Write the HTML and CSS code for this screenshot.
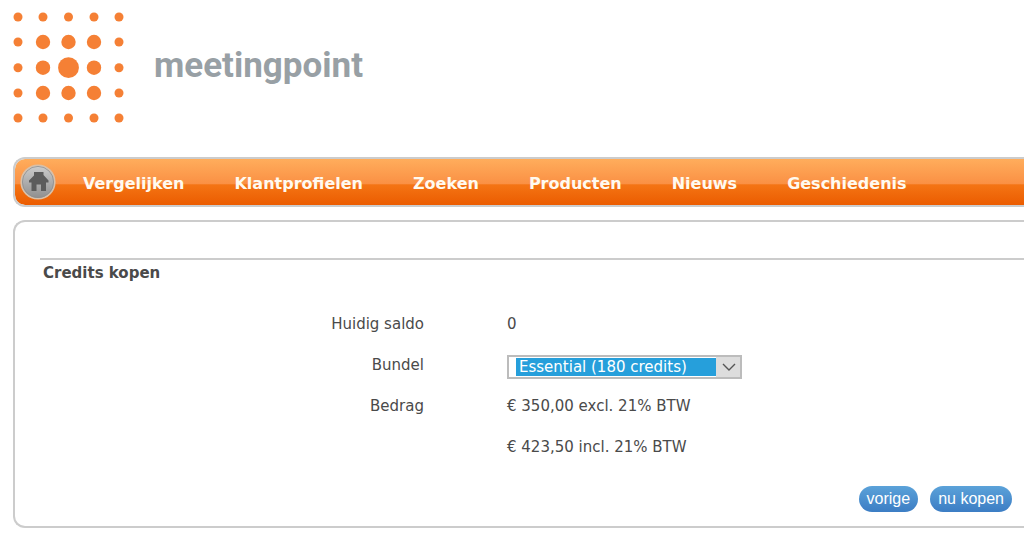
FILE: index.html
```html
<!DOCTYPE html>
<html lang="nl">
<head>
<meta charset="utf-8">
<meta name="viewport" content="width=device-width, initial-scale=1">
<title>Credits kopen - meetingpoint</title>
<link rel="stylesheet" href="styles.css">
</head>
<body>
<header class="header">
  <svg class="logo" viewBox="0 0 112 112" width="112" height="112" aria-hidden="true">
    <g fill="#f58035">
      <circle cx="5" cy="5" r="4.5"/><circle cx="30" cy="5" r="4.5"/><circle cx="55.5" cy="5" r="4.5"/><circle cx="81" cy="5" r="4.5"/><circle cx="106" cy="5" r="4.5"/>
      <circle cx="5" cy="30" r="4.5"/><circle cx="30" cy="30" r="7.2"/><circle cx="55.5" cy="30" r="7.2"/><circle cx="81" cy="30" r="7.2"/><circle cx="106" cy="30" r="4.5"/>
      <circle cx="5" cy="55.7" r="4.5"/><circle cx="30" cy="55.7" r="7.2"/><circle cx="55.5" cy="55.7" r="10.4"/><circle cx="81" cy="55.7" r="7.2"/><circle cx="106" cy="55.7" r="4.5"/>
      <circle cx="5" cy="81" r="4.5"/><circle cx="30" cy="81" r="7.2"/><circle cx="55.5" cy="81" r="7.2"/><circle cx="81" cy="81" r="7.2"/><circle cx="106" cy="81" r="4.5"/>
      <circle cx="5" cy="106" r="4.5"/><circle cx="30" cy="106" r="4.5"/><circle cx="55.5" cy="106" r="4.5"/><circle cx="81" cy="106" r="4.5"/><circle cx="106" cy="106" r="4.5"/>
    </g>
  </svg>
  <span class="wordmark">meetingpoint</span>
</header>
<nav class="nav">
  <a class="home" href="#" aria-label="Home">
    <svg viewBox="0 0 36 36" width="36" height="36" aria-hidden="true">
      <defs><linearGradient id="disc" x1="0" y1="0" x2="0" y2="1"><stop offset="0" stop-color="#cdcdcd"/><stop offset="1" stop-color="#8e8e8e"/></linearGradient></defs>
      <circle cx="18" cy="18" r="16.8" fill="url(#disc)" stroke="#d9c0a8" stroke-width="1.6"/>
      <circle cx="18" cy="18" r="15.6" fill="none" stroke="#8f8f8f" stroke-width="0.8"/>
      <path d="M14 8 H23.5 V11 L28.5 16.5 V18.5 H26 V27 H21 V20.5 H16.5 V27 H11.5 V18.5 H9 V16.5 L14 11.5 Z" fill="#5c5c5c"/>
    </svg>
  </a>
  <a href="#">Vergelijken</a>
  <a href="#">Klantprofielen</a>
  <a href="#">Zoeken</a>
  <a href="#">Producten</a>
  <a href="#">Nieuws</a>
  <a href="#">Geschiedenis</a>
</nav>
<main class="panel">
  <h1 class="title">Credits kopen</h1>
  <form class="form">
    <div class="row"><span class="label">Huidig saldo</span><span>0</span></div>
    <div class="row">
      <label class="label" for="bundle">Bundel</label>
      <span class="picker">
        <select class="select" id="bundle"><option>Essential (180 credits)</option></select>
        <svg class="arrow" viewBox="0 0 26 20" width="26" height="20" aria-hidden="true"><path d="M7 7 L13 13 L19 7" fill="none" stroke="#555" stroke-width="1.4"/></svg>
      </span>
    </div>
    <div class="row"><span class="label">Bedrag</span><span>€ 350,00 excl. 21% BTW</span></div>
    <div class="row"><span class="label"></span><span>€ 423,50 incl. 21% BTW</span></div>
    <div class="actions">
      <button class="button" type="button">vorige</button>
      <button class="button" type="submit">nu kopen</button>
    </div>
  </form>
</main>
</body>
</html>
```
FILE: styles.css
```css
* { box-sizing: border-box; }
body {
  margin: 0;
  padding: 12px 0 8px 13px;
  background: #fff;
  color: #4a4a4a;
  font: 15px/20px Verdana, "DejaVu Sans", sans-serif;
}
.header { display: flex; align-items: center; gap: 29px; }
.wordmark {
  padding-bottom: 4px;
  color: #98a0a5;
  font: bold 35px/44px Roboto, "Liberation Sans", sans-serif;
}
.nav {
  display: flex;
  align-items: center;
  gap: 50px;
  height: 50px;
  margin-top: 33px;
  padding-left: 5px;
  border: 2px solid #ccc;
  border-right: 0;
  border-radius: 12px 0 0 12px;
  background: linear-gradient(#ffad5c, #fa9044 54%, #f47414 56%, #eb5c00);
  background-clip: padding-box;
  font-size: 16px;
  font-weight: bold;
  white-space: nowrap;
}
.nav a { padding-top: 4px; color: #fffaf0; text-decoration: none; }
.nav .home { height: 36px; margin-right: -23px; padding: 0; }
.home svg { display: block; }
.panel {
  margin-top: 13px;
  padding: 36px 0 14px 25px;
  border: 2px solid #ccc;
  border-right: 0;
  border-radius: 12px 0 0 12px;
}
.title {
  margin: 0;
  padding: 3px;
  border-top: 2px solid #ccc;
  font-size: 15px;
  line-height: 20px;
}
.form { padding-top: 17px; }
.row {
  display: grid;
  grid-template-columns: 384px 1fr;
  column-gap: 83px;
  align-items: center;
  height: 41px;
}
.label { text-align: right; }
.picker { position: relative; width: 235px; height: 24px; margin-top: 4px; }
.select {
  display: block;
  width: 100%;
  height: 24px;
  padding: 0 26px 0 10px;
  appearance: none;
  border: 2px solid #bcbcbc;
  border-radius: 0;
  background:
    linear-gradient(#269fdb, #269fdb) 7px 1px / 200px 18px no-repeat,
    linear-gradient(#ddd, #ddd) right / 24px 100% no-repeat,
    #fff;
  color: #fff;
  font: inherit;
  line-height: 20px;
}
.arrow { position: absolute; top: 2px; right: 0; pointer-events: none; }
.actions {
  display: flex;
  justify-content: flex-end;
  gap: 12px;
  padding: 19px 12px 0 0;
}
.button {
  height: 26px;
  padding: 0 8px;
  border: 0;
  border-radius: 13px;
  background: linear-gradient(#5ba2d9, #3c7dc4);
  color: #fff;
  font: 16px/26px "Liberation Sans", Arial, sans-serif;
}
```
